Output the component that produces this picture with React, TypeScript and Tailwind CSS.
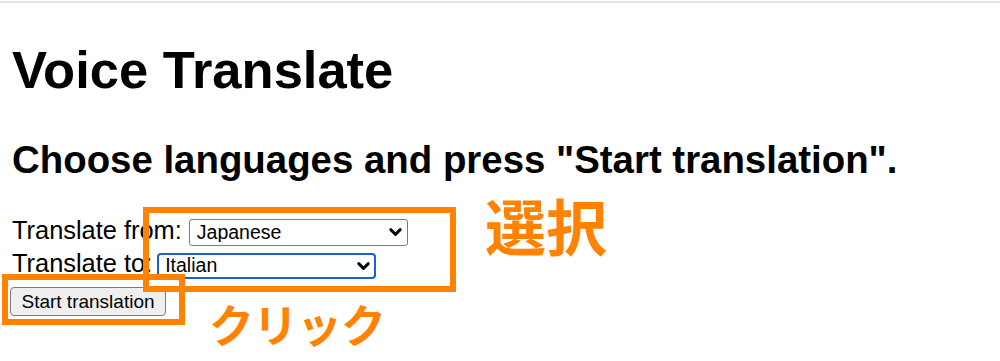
import { ChevronDown } from "lucide-react"

const LANGS = ["Japanese", "English", "Italian", "French", "German", "Spanish"]

function LangSelect({ value, focused }: { value: string; focused?: boolean }) {
  return (
    <div className="relative">
      <select
        defaultValue={value}
        className={
          focused
            ? "appearance-none w-[219px] h-[26px] pl-[6px] pr-8 rounded-[4px] border-2 border-[#1b5fd8] bg-white text-[19.5px] leading-none text-black outline-none"
            : "appearance-none w-[219px] h-[27px] pl-[7px] pr-8 rounded-[3px] border border-[#7a7a7a] bg-white text-[19.5px] leading-none text-black outline-none"
        }
      >
        {LANGS.map((l) => (
          <option key={l}>{l}</option>
        ))}
      </select>
      <ChevronDown
        className="pointer-events-none absolute right-[3px] top-1/2 -translate-y-1/2 w-[19px] h-[19px] text-black"
        strokeWidth={3.6}
      />
    </div>
  )
}

export default function App() {
  return (
    <div className="relative w-full h-[361px] overflow-hidden bg-white text-black font-['Liberation_Sans',Arial,sans-serif]">
      {/* top edge */}
      <div className="mt-px h-[2px] bg-[#e3e3e3]" />

      <div className="px-[12px]">
        <h1 className="mt-[41px] text-[52.5px] leading-none font-bold">Voice Translate</h1>
        <h2 className="mt-[44px] text-[38.4px] leading-none font-bold">
          Choose languages and press "Start translation".
        </h2>

        {/* form */}
        <div className="mt-[40px] flex flex-col">
          <div className="flex items-center h-[27px]">
            <label className="text-[25.4px] leading-none pb-[4px]">Translate from:</label>
            <span className="w-[7px]" />
            <LangSelect value="Japanese" />
          </div>
          <div className="mt-[7px] flex items-center h-[26px]">
            <label className="text-[25.4px] leading-none pb-[5px]">Translate to:</label>
            <span className="w-[5px]" />
            <LangSelect value="Italian" focused />
          </div>
          <div className="mt-[8px] -ml-[2px]">
            <button className="w-[156px] h-[29px] rounded-[4px] border border-[#7a7a7a] bg-[#efefef] text-[19px] leading-none text-black">
              Start translation
            </button>
          </div>
        </div>
      </div>

      {/* annotations */}
      <div className="absolute left-[143px] top-[207px] w-[313px] h-[85px] border-[6px] border-[#ff8200]" />
      <div className="absolute left-[2px] top-[274px] w-[183px] h-[51px] border-[6px] border-[#ff8200]" />
      <div className="absolute left-[485px] top-[194px] text-[61px] leading-none font-bold text-[#ff8200] font-['Noto_Sans_CJK_JP',sans-serif]">
        選択
      </div>
      <div className="absolute left-[209px] top-[301px] text-[45px] leading-none font-bold text-[#ff8200] tracking-[-1px] font-['Noto_Sans_CJK_JP',sans-serif]">
        クリック
      </div>
    </div>
  )
}
